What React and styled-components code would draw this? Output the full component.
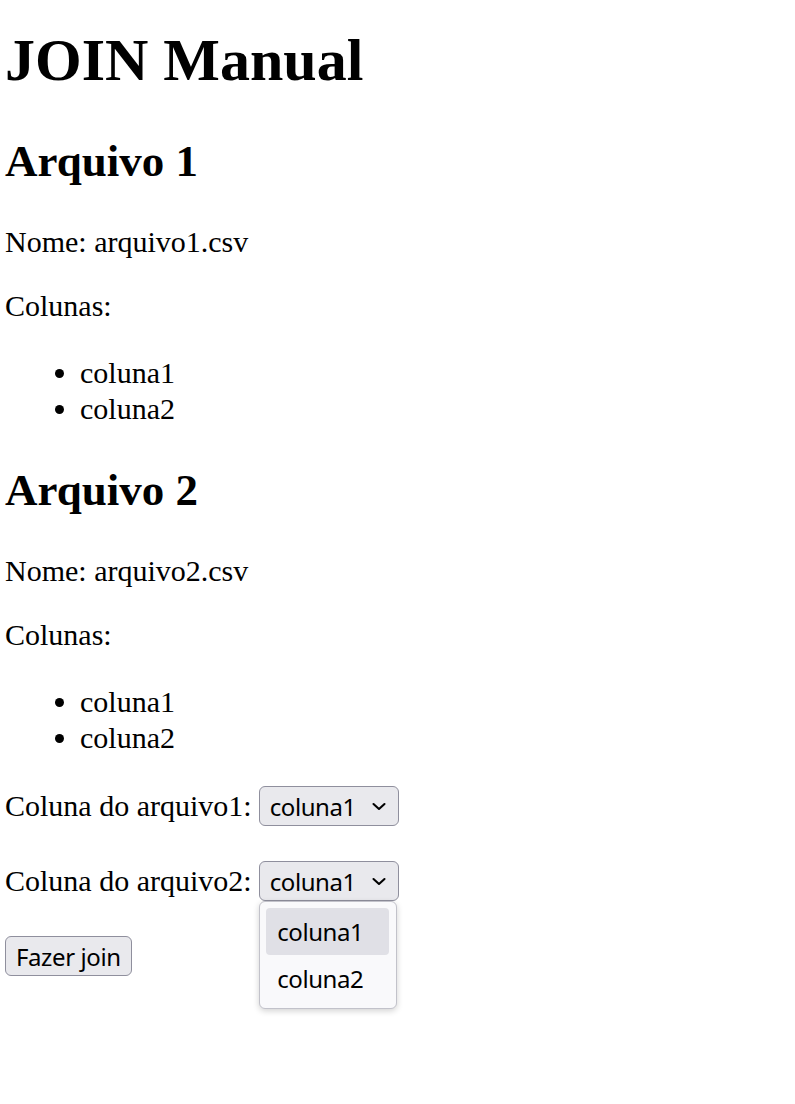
import React from 'react';
import styled, { createGlobalStyle } from 'styled-components';

const GlobalStyle = createGlobalStyle`
  html, body {
    min-height: 100vh;
  }

  body {
    margin: 0;
    padding: 0 5px;
    background: #fff;
    color: #000;
    font-family: "Liberation Serif", "Times New Roman", serif;
    font-size: 30px;
  }
`;

const Title = styled.h1`
  font-size: 60px;
  font-weight: bold;
  margin: 26px 0 40px;
`;

const FileTitle = styled.h2`
  font-size: 45px;
  font-weight: bold;
  margin: 37px 0 38px;
`;

const Info = styled.p`
  margin: 30px 0;
`;

const ColumnList = styled.ul`
  margin: 32px 0 30px;
  padding-left: 75px;
`;

const ColumnItem = styled.li`
  line-height: 36px;
`;

const Row = styled.div`
  display: flex;
  align-items: center;
  gap: 7px;
  margin: 30px 0 35px;
`;

const SelectWrap = styled.div`
  position: relative;
`;

const SelectBox = styled.div`
  box-sizing: border-box;
  display: flex;
  align-items: center;
  justify-content: space-between;
  width: 140px;
  height: 40px;
  padding: 0 12px 0 10px;
  border: 1.5px solid #8f8f9d;
  border-radius: 6px;
  background: #e9e9ed;
  font-family: "Noto Sans", "Open Sans", sans-serif;
  font-size: 24px;
  letter-spacing: -0.4px;
  color: #000;

  svg {
    width: 14px;
    height: 9px;
  }
`;

const Dropdown = styled.div`
  position: absolute;
  top: 100%;
  left: 0;
  box-sizing: border-box;
  width: 138px;
  padding: 6px 6.5px;
  border: 1px solid #c2c2ca;
  border-radius: 6px;
  background: #f9f9fb;
  box-shadow: 0 2px 6px rgba(0, 0, 0, 0.18);
  z-index: 2;
`;

const Option = styled.div`
  display: flex;
  align-items: center;
  height: 47px;
  padding: 0 11px;
  border-radius: 4px;
  background: ${props => (props.active ? '#e0e0e6' : 'transparent')};
  font-family: "Noto Sans", "Open Sans", sans-serif;
  font-size: 24px;
  letter-spacing: -0.4px;
  color: #000;
`;

const Actions = styled.div`
  margin-top: 35px;
`;

const Button = styled.button`
  box-sizing: border-box;
  height: 40px;
  padding: 0 10px;
  border: 1.5px solid #8f8f9d;
  border-radius: 6px;
  background: #e9e9ed;
  font-family: "Noto Sans", "Open Sans", sans-serif;
  font-size: 24px;
  letter-spacing: -0.4px;
  color: #000;
`;

const files = [
  { title: 'Arquivo 1', name: 'arquivo1.csv', columns: ['coluna1', 'coluna2'] },
  { title: 'Arquivo 2', name: 'arquivo2.csv', columns: ['coluna1', 'coluna2'] }
];

const Chevron = () => (
  <svg viewBox="0 0 14 9" fill="none">
    <path d="M1.5 2l5.5 5 5.5-5" stroke="#000" strokeWidth="2.1" strokeLinecap="round" strokeLinejoin="round" />
  </svg>
);

const Select = ({ value, options, open }) => (
  <SelectWrap>
    <SelectBox>
      <span>{value}</span>
      <Chevron />
    </SelectBox>
    {open && (
      <Dropdown>
        {options.map(opt => (
          <Option key={opt} active={opt === value}>{opt}</Option>
        ))}
      </Dropdown>
    )}
  </SelectWrap>
);

const App = () => (
  <>
    <GlobalStyle />
    <Title>JOIN Manual</Title>
    {files.map(file => (
      <section key={file.title}>
        <FileTitle>{file.title}</FileTitle>
        <Info>Nome: {file.name}</Info>
        <Info>Colunas:</Info>
        <ColumnList>
          {file.columns.map(col => <ColumnItem key={col}>{col}</ColumnItem>)}
        </ColumnList>
      </section>
    ))}
    <Row>
      Coluna do arquivo1:
      <Select value="coluna1" options={['coluna1', 'coluna2']} />
    </Row>
    <Row>
      Coluna do arquivo2:
      <Select value="coluna1" options={['coluna1', 'coluna2']} open />
    </Row>
    <Actions>
      <Button>Fazer join</Button>
    </Actions>
  </>
);

export default App;
